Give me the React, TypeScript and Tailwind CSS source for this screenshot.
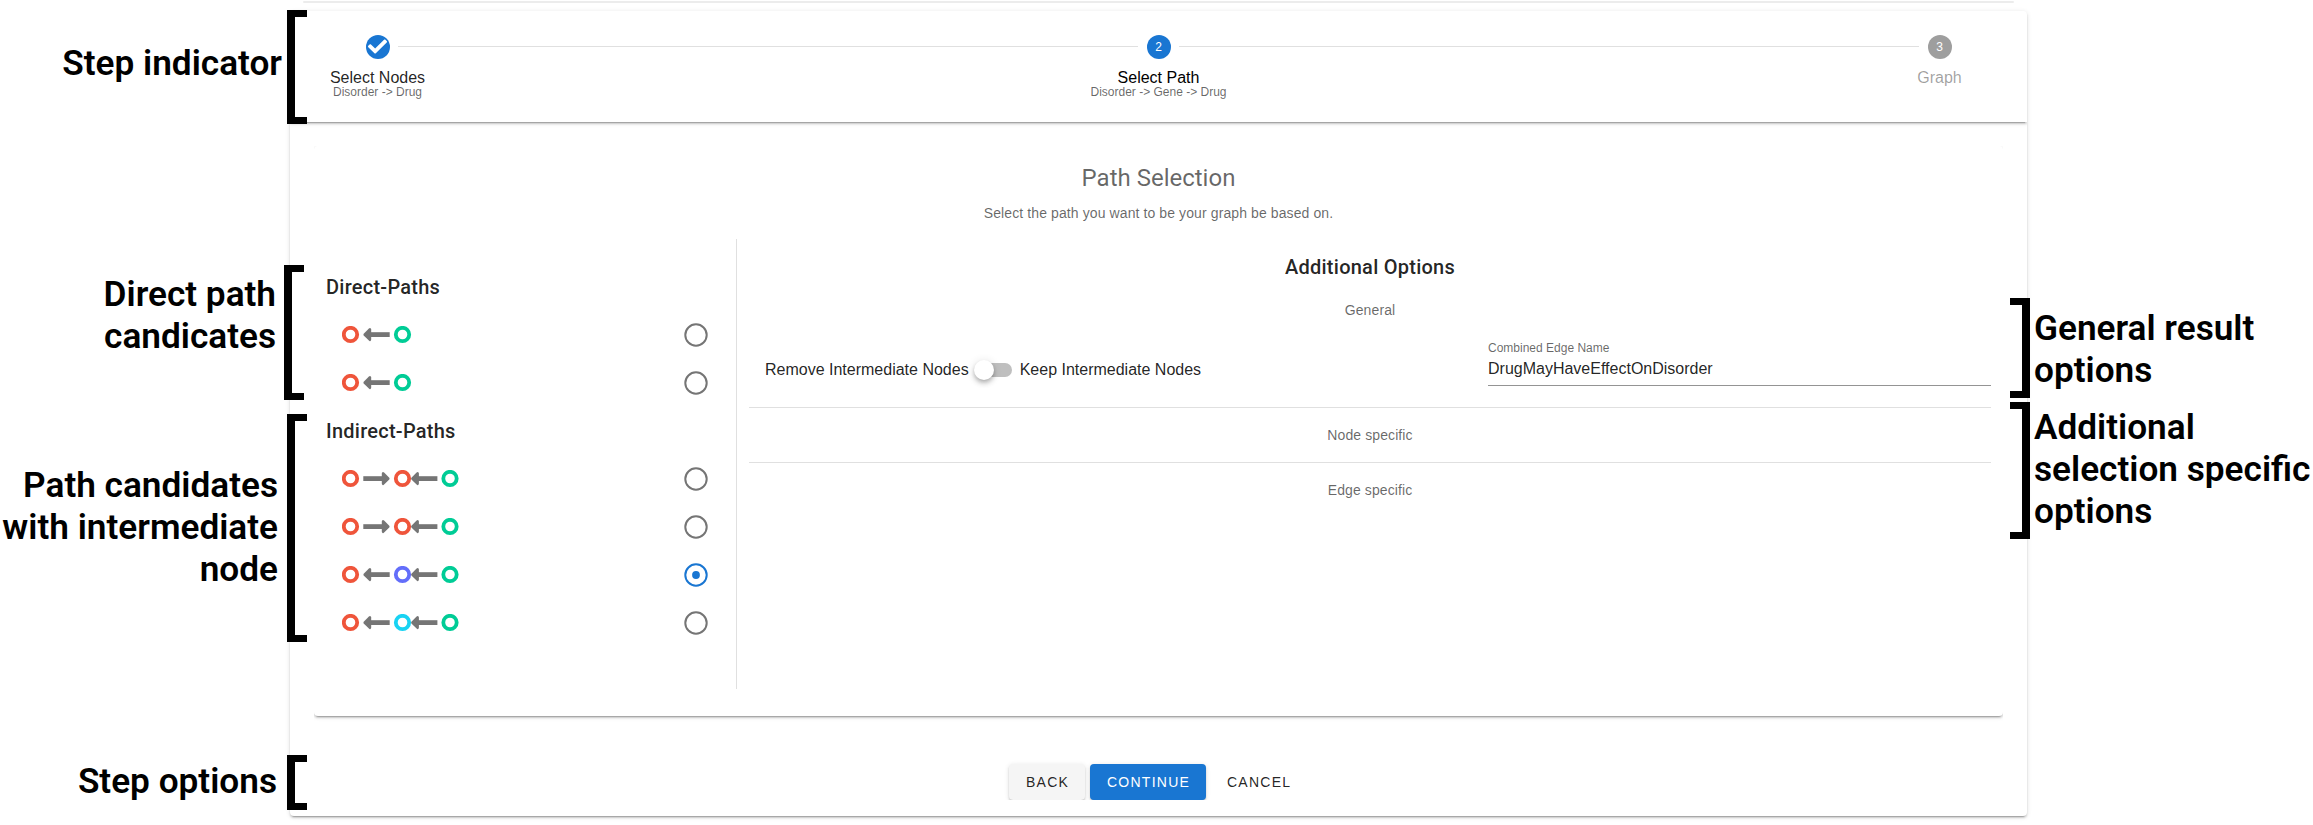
import type { ReactNode } from "react";
import { FaCheck } from "react-icons/fa";

const RED = "#ef553b";
const GREEN = "#00cc96";
const PURPLE = "#636efa";
const CYAN = "#19d3f3";

const elevation =
  "shadow-[0_3px_1px_-2px_rgba(0,0,0,0.2),0_2px_2px_0_rgba(0,0,0,0.14),0_1px_5px_0_rgba(0,0,0,0.12)]";

type Direction = "left" | "right";
type Path = { nodes: string[]; arrows: Direction[]; selected?: boolean };

const directPaths: Path[] = [
  { nodes: [RED, GREEN], arrows: ["left"] },
  { nodes: [RED, GREEN], arrows: ["left"] },
];

const indirectPaths: Path[] = [
  { nodes: [RED, RED, GREEN], arrows: ["right", "left"] },
  { nodes: [RED, RED, GREEN], arrows: ["right", "left"] },
  { nodes: [RED, PURPLE, GREEN], arrows: ["left", "left"], selected: true },
  { nodes: [RED, CYAN, GREEN], arrows: ["left", "left"] },
];

const nodeX = [8.5, 60.5, 108];
const arrowX = [21.3, 69];

function PathDiagram({ nodes, arrows }: Path) {
  return (
    <svg width="118" height="18" viewBox="0 0 118 18">
      {nodes.map((color, i) => (
        <circle key={i} cx={nodeX[i]} cy="8.5" r="6.7" fill="none" stroke={color} strokeWidth="3.8" />
      ))}
      {arrows.map((dir, i) => (
        <g
          key={i}
          fill="#757575"
          transform={
            dir === "left" ? `translate(${arrowX[i]} -0.4)` : `translate(${arrowX[i] + 26.4} -0.4) scale(-1 1)`
          }
        >
          <path d="M7 6.6H26.4V11.4H7Z" />
          <path d="M0.4 8.2L5.6 3Q6.4 2.2 7.2 2.6Q7.9 3 7.9 4V14Q7.9 15 7.2 15.4Q6.4 15.8 5.6 15L0.4 9.8Q-0.2 9 0.4 8.2Z" />
        </g>
      ))}
    </svg>
  );
}

function Radio({ selected }: { selected?: boolean }) {
  const color = selected ? "#1976d2" : "#757575";
  return (
    <svg width="24" height="24" viewBox="0 0 24 24">
      <circle cx="12" cy="12" r="10.7" fill="none" stroke={color} strokeWidth="2" />
      {selected && <circle cx="12" cy="12" r="3.9" fill={color} />}
    </svg>
  );
}

function PathGroup({ title, paths }: { title: string; paths: Path[] }) {
  return (
    <section>
      <h3 className="flex h-12 items-center pl-3 font-['Roboto',sans-serif] text-xl leading-8 font-medium tracking-[0.25px]">
        {title}
      </h3>
      {paths.map((path, i) => (
        <div key={i} className="flex h-12 items-center justify-between pr-7 pl-7">
          <PathDiagram {...path} />
          <Radio selected={path.selected} />
        </div>
      ))}
    </section>
  );
}

function Step({ badge, label, hint, state }: { badge: ReactNode; label: string; hint?: string; state: string }) {
  const tone = state === "pending" ? "text-black/38" : state === "active" ? "text-black" : "text-black/87";
  return (
    <div className="flex w-[175px] shrink-0 flex-col items-center pt-6">
      <span
        className={
          "mb-[11px] flex size-6 items-center justify-center rounded-full text-xs text-white " +
          (state === "pending" ? "bg-[#9e9e9e]" : "bg-[#1976d2]")
        }
      >
        {badge}
      </span>
      <span className={"text-base leading-4 whitespace-nowrap " + tone}>{label}</span>
      {hint && <small className="text-xs leading-3 whitespace-nowrap text-black/60">{hint}</small>}
    </div>
  );
}

function StepLine() {
  return <div className="-mx-[67px] mt-[35px] h-px flex-1 bg-black/12" />;
}

function SectionTitle({ children }: { children: ReactNode }) {
  return <h4 className="text-center text-sm leading-[22px] tracking-[0.1px] text-black/60">{children}</h4>;
}

function Note({ place, lines }: { place: string; lines: string[] }) {
  return (
    <div
      className={
        "absolute font-['Roboto',sans-serif] text-[35.2px] leading-[42px] font-semibold whitespace-nowrap text-black " +
        place
      }
    >
      {lines.map((line) => (
        <div key={line}>{line}</div>
      ))}
    </div>
  );
}

function Bracket({ place }: { place: string }) {
  return <div className={"absolute w-5 border-y-[7px] border-black " + place} />;
}

export default function App() {
  return (
    <div className="relative h-[825px] w-[2313px] overflow-hidden bg-white pl-[290px] font-['Liberation_Sans',Arial,sans-serif] text-black/87">
      <div className="ml-[13px] h-[11px] w-[1711px] pt-px">
        <div className="h-0.5 rounded-sm bg-[#ececec]" />
      </div>

      <main className={"flex h-[805px] w-[1737px] flex-col overflow-hidden rounded bg-white " + elevation}>
        <header className={"flex h-[111px] shrink-0 " + elevation}>
          <Step
            state="done"
            label="Select Nodes"
            hint="Disorder -> Drug"
            badge={<FaCheck className="mb-px size-[19px]" />}
          />
          <StepLine />
          <Step state="active" label="Select Path" hint="Disorder -> Gene -> Drug" badge="2" />
          <StepLine />
          <Step state="pending" label="Graph" badge="3" />
        </header>

        <div className="mx-6 mt-6 mb-4 flex-1 overflow-hidden">
          <section className={"flex h-[570px] flex-col rounded pt-4 " + elevation}>
            <h1 className="text-center font-['Roboto',sans-serif] text-2xl leading-8 text-black/60">Path Selection</h1>
            <p className="mt-2 text-center text-sm leading-[22px] tracking-[0.1px] text-black/60">
              Select the path you want to be your graph be based on.
            </p>

            <div className="mt-[15px] flex h-[450px]">
              <div className="w-[423px] border-r border-black/12 pt-6">
                <PathGroup title="Direct-Paths" paths={directPaths} />
                <PathGroup title="Indirect-Paths" paths={indirectPaths} />
              </div>

              <div className="flex-1 p-3">
                <h2 className="text-center font-['Roboto',sans-serif] text-xl leading-8 font-medium tracking-[0.25px]">
                  Additional Options
                </h2>
                <div className="mt-4">
                  <SectionTitle>General</SectionTitle>
                </div>
                <div className="flex h-[86px] justify-between">
                  <div className="mt-[37px] flex h-6 items-center pl-4 text-base leading-6">
                    <span>Remove Intermediate Nodes</span>
                    <span className="relative mr-2 ml-[7px] flex h-3.5 w-9 rounded-full bg-[#bfbfbf]">
                      <span className="absolute -top-[3px] -left-0.5 size-5 rounded-full bg-white shadow-[0_2px_4px_-1px_rgba(0,0,0,0.2),0_4px_5px_0_rgba(0,0,0,0.14),0_1px_10px_0_rgba(0,0,0,0.12)]" />
                    </span>
                    <span>Keep Intermediate Nodes</span>
                  </div>
                  <div className="mt-[17px] flex h-12 w-[503px] flex-col border-b border-black/42">
                    <label className="mt-[2px] text-xs leading-4 text-black/60">Combined Edge Name</label>
                    <span className="mt-px text-base leading-6">DrugMayHaveEffectOnDisorder</span>
                  </div>
                </div>
                <div className="h-px bg-black/12" />
                <div className="py-4">
                  <SectionTitle>Node specific</SectionTitle>
                </div>
                <div className="h-px bg-black/12" />
                <div className="py-4">
                  <SectionTitle>Edge specific</SectionTitle>
                </div>
              </div>
            </div>
          </section>

          <div className="mt-12 flex gap-[5px] pl-[695px] text-sm tracking-[1.25px]">
            <button className={"flex h-9 w-[76px] items-center rounded bg-[#f5f5f5] pl-[17px] " + elevation}>
              BACK
            </button>
            <button className={"flex h-9 w-[116px] items-center rounded bg-[#1976d2] pl-[17px] text-white " + elevation}>
              CONTINUE
            </button>
            <button className="flex h-9 items-center rounded px-4">CANCEL</button>
          </div>
        </div>
      </main>

      <Note place="right-[2031px] top-[42px] text-right" lines={["Step indicator"]} />
      <Note place="right-[2037px] top-[273px] text-right" lines={["Direct path", "candicates"]} />
      <Note place="right-[2035px] top-[464px] text-right" lines={["Path candidates", "with intermediate", "node"]} />
      <Note place="right-[2036px] top-[760px] text-right" lines={["Step options"]} />
      <Note place="left-[2034px] top-[307px]" lines={["General result", "options"]} />
      <Note place="left-[2034px] top-[406px]" lines={["Additional", "selection specific", "options"]} />

      <Bracket place="left-[287px] top-[10px] h-[114px] border-l-8" />
      <Bracket place="left-[284px] top-[265px] h-[135px] border-l-8" />
      <Bracket place="left-[287px] top-[414px] h-[228px] border-l-8" />
      <Bracket place="left-[287px] top-[755px] h-[55px] border-l-8" />
      <Bracket place="left-[2010px] top-[298px] h-[100px] border-r-8" />
      <Bracket place="left-[2010px] top-[402px] h-[137px] border-r-8" />
    </div>
  );
}
